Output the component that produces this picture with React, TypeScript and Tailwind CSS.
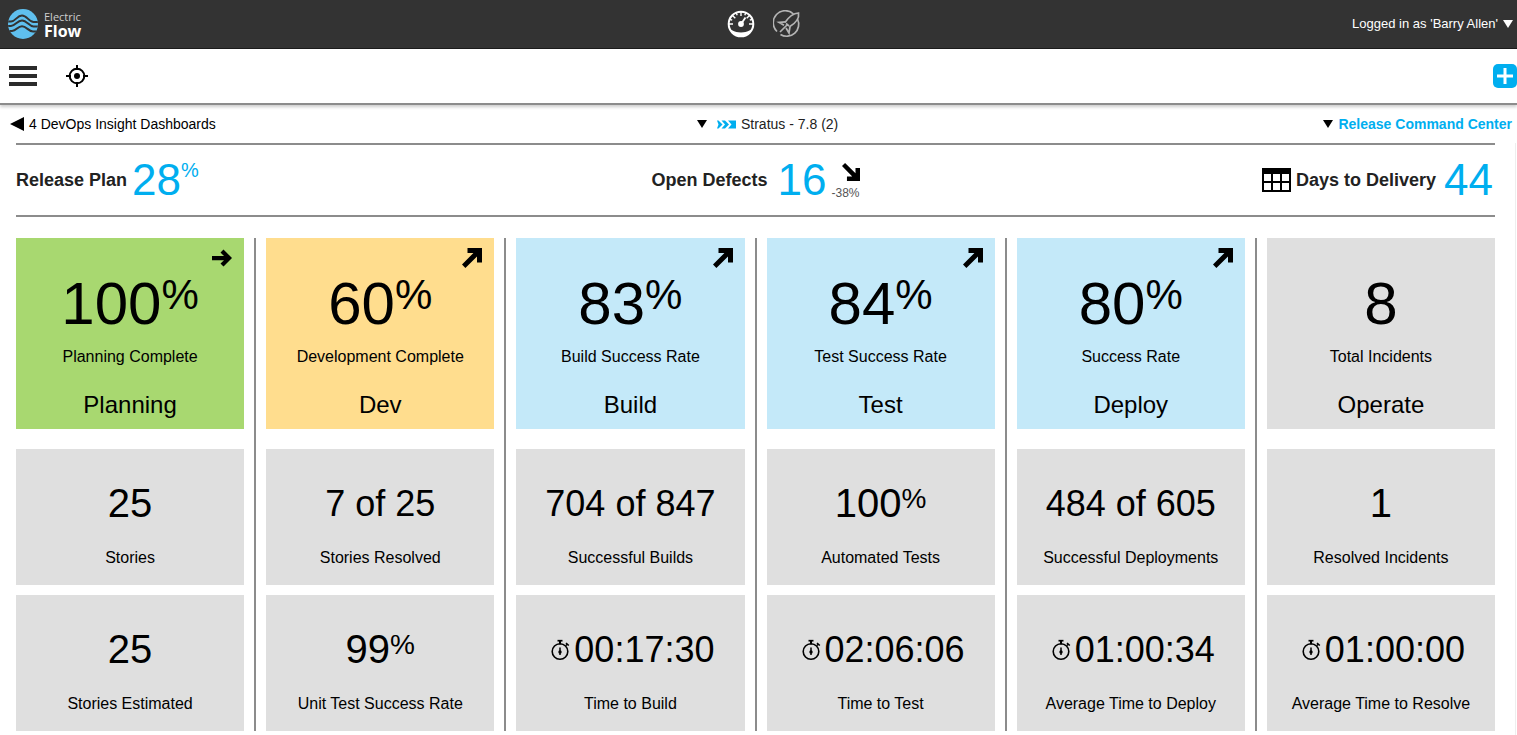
import type { ReactNode } from "react";

type Trend = "flat" | "up";

interface Metric {
    value: string;
    unit?: string;
    label: string;
    timer?: boolean;
}

interface Stage {
    name: string;
    color: string;
    trend?: Trend;
    headline: Metric;
    metrics: Metric[];
}

const stages: Stage[] = [
    {
        name: "Planning",
        color: "bg-[#a8d870]",
        trend: "flat",
        headline: { value: "100", unit: "%", label: "Planning Complete" },
        metrics: [
            { value: "25", label: "Stories" },
            { value: "25", label: "Stories Estimated" },
        ],
    },
    {
        name: "Dev",
        color: "bg-[#ffdd8e]",
        trend: "up",
        headline: { value: "60", unit: "%", label: "Development Complete" },
        metrics: [
            { value: "7 of 25", label: "Stories Resolved" },
            { value: "99", unit: "%", label: "Unit Test Success Rate" },
        ],
    },
    {
        name: "Build",
        color: "bg-[#c4e9f9]",
        trend: "up",
        headline: { value: "83", unit: "%", label: "Build Success Rate" },
        metrics: [
            { value: "704 of 847", label: "Successful Builds" },
            { value: "00:17:30", label: "Time to Build", timer: true },
        ],
    },
    {
        name: "Test",
        color: "bg-[#c4e9f9]",
        trend: "up",
        headline: { value: "84", unit: "%", label: "Test Success Rate" },
        metrics: [
            { value: "100", unit: "%", label: "Automated Tests" },
            { value: "02:06:06", label: "Time to Test", timer: true },
        ],
    },
    {
        name: "Deploy",
        color: "bg-[#c4e9f9]",
        trend: "up",
        headline: { value: "80", unit: "%", label: "Success Rate" },
        metrics: [
            { value: "484 of 605", label: "Successful Deployments" },
            { value: "01:00:34", label: "Average Time to Deploy", timer: true },
        ],
    },
    {
        name: "Operate",
        color: "bg-[#dfdfdf]",
        headline: { value: "8", label: "Total Incidents" },
        metrics: [
            { value: "1", label: "Resolved Incidents" },
            { value: "01:00:00", label: "Average Time to Resolve", timer: true },
        ],
    },
];

function Logo() {
    return (
        <a href="#" className="flex items-center gap-1.5 text-white">
            <svg viewBox="0 0 30 30" className="h-[30px] w-[30px]" aria-hidden="true">
                <defs>
                    <clipPath id="logo-disc">
                        <circle cx="15" cy="15" r="15" />
                    </clipPath>
                </defs>
                <g clipPath="url(#logo-disc)">
                    <rect width="30" height="30" fill="#5fbfee" />
                    <g fill="none" stroke="#333" strokeWidth="2">
                        <path d="M-1 12.500h4c4.500 0 6-6 11-6S21 13 25.500 13H31" />
                        <path d="M-1 17h4c4.500 0 6-5.500 11-5.500s7 6 11.500 6H31" />
                        <path d="M-1 22h5c4.500 0 5.500-4.800 10-4.800s6.500 5.300 11 5.300H31" />
                    </g>
                </g>
            </svg>
            <span className="flex flex-col font-['Open_Sans',sans-serif]">
                <span className="text-[11px] leading-[14px] text-[#cfcfcf]">Electric</span>
                <span className="text-base leading-[14px] font-bold">Flow</span>
            </span>
        </a>
    );
}

function GaugeIcon() {
    return (
        <svg viewBox="0 0 28 28" className="h-7 w-7" fill="none" stroke="#fff" aria-hidden="true">
            <circle cx="14" cy="14" r="12.300" strokeWidth="2" />
            <path d="M3 19.500c2.500 0 3.500 3 11 3s8.500-3 11-3c-2 4.500-6 7-11 7s-9-2.500-11-7z" fill="#fff" stroke="none" />
            <path d="M2 14h4M22 14h4M14 2v4M5.500 5.500l2.800 2.800M22.500 5.500l-2.800 2.800M9.300 3l.9 2.200M18.700 3l-.9 2.200M3 9.300l2.200.9M25 9.300l-2.200.9" strokeWidth="1.400" />
            <path d="M14 14l4.500-6.500" strokeWidth="1.800" />
            <circle cx="14" cy="14" r="2.900" fill="#fff" stroke="none" />
        </svg>
    );
}

function RocketIcon() {
    return (
        <svg viewBox="0 0 28 28" className="h-7 w-7" fill="none" stroke="#b4b4b4" strokeWidth="1.700" aria-hidden="true">
            <path d="M4 21.500A12 12 0 0 1 20.500 4" />
            <path d="M7.500 24.500A12 12 0 0 0 24.500 9" />
            <path d="M12 12.500C15 8 19.500 3.500 25.500 3c1 5.500-3.500 10.500-9 13.800" />
            <path d="M12.500 11.800L6 12.300l5 3M17 16.500l-1 6.500-3-5" />
            <path d="M13 13.500l3 2.500M14 15l-7 7" />
        </svg>
    );
}

function CrosshairIcon() {
    return (
        <svg viewBox="0 0 22 22" className="h-[22px] w-[22px]" fill="none" stroke="#000" strokeWidth="2" aria-hidden="true">
            <circle cx="11" cy="11" r="7.300" />
            <path d="M11 0v5M11 17v5M0 11h5M17 11h5" />
            <circle cx="11" cy="11" r="3" fill="#000" stroke="none" />
        </svg>
    );
}

function PipelineIcon() {
    return (
        <svg viewBox="0 0 19 9" className="h-[9px] w-[19px]" fill="#00aeef" aria-hidden="true">
            <path d="M0 .5h1.500L5.500 4.500l-4 4H0l1.500-4z" />
            <path d="M4.500.5H8l4 4-4 4H4.500l3.500-4z" />
            <path d="M11 .5h8v8h-8l3.500-4z" />
        </svg>
    );
}

function CalendarGridIcon() {
    return (
        <svg viewBox="0 0 29 24" className="h-6 w-[29px]" aria-hidden="true">
            <rect x="1" y="1" width="27" height="22" fill="#fff" stroke="#000" strokeWidth="2" />
            <rect width="29" height="6" />
            <path d="M10 5v18M19 5v18M1 14h27" stroke="#000" strokeWidth="2" />
        </svg>
    );
}

function StopwatchIcon() {
    return (
        <svg viewBox="0 0 24 24" className="h-6 w-6" fill="none" stroke="#000" aria-hidden="true">
            <circle cx="14" cy="14.500" r="7.800" strokeWidth="1.600" />
            <path d="M11.500 3.700h5" strokeWidth="1.700" />
            <path d="M14 4v3.500" strokeWidth="2" />
            <path d="M20 8.500L21.500 7M20 6l2.800 2.500" strokeWidth="1.600" />
            <path d="M14 10.500V18" strokeWidth="1.500" />
            <circle cx="14" cy="15" r="1.700" fill="#000" stroke="none" />
        </svg>
    );
}

function ArrowUpRight({ className }: { className: string }) {
    return (
        <svg viewBox="0 0 20 20" className={className} aria-hidden="true">
            <path d="M5.500 0H20v14.500h-5V8.600L3.400 20 0 16.600 11.400 5H5.500z" />
        </svg>
    );
}

function ArrowRight({ className }: { className: string }) {
    return (
        <svg viewBox="0 0 20 20" className={className} aria-hidden="true">
            <path d="M0 8h12L8.500 4.500 11.500 1.500 20 10l-8.500 8.500-3-3L12 12.200H0z" />
        </svg>
    );
}

function Caret({ className }: { className: string }) {
    return (
        <svg viewBox="0 0 10 8" className={className} fill="currentColor" aria-hidden="true">
            <path d="M0 0h10L5 8z" />
        </svg>
    );
}

function Card({ color, children }: { color: string; children: ReactNode }) {
    return <div className={`relative flex flex-col items-center whitespace-nowrap ${color}`}>{children}</div>;
}

function HeadlineCard({ stage }: { stage: Stage }) {
    const { headline, trend } = stage;

    return (
        <Card color={stage.color}>
            {trend === "up" && <ArrowUpRight className="absolute top-2.5 right-3 h-5 w-5" />}
            {trend === "flat" && <ArrowRight className="absolute top-2.5 right-3 h-5 w-5" />}
            <p className="flex items-start pt-9 text-[60px] leading-none">
                {headline.value}
                {headline.unit && <span className="text-[42px] leading-none">{headline.unit}</span>}
            </p>
            <p className="mt-[11px] text-base leading-6">{headline.label}</p>
            <h2 className="mt-5 pb-2 text-2xl leading-8">{stage.name}</h2>
        </Card>
    );
}

function MetricCard({ metric }: { metric: Metric }) {
    // ratios and durations are wider, so they use the smaller size
    const size = metric.value.length > 3 ? "text-4xl leading-[42px]" : "text-[40px] leading-10";

    return (
        <Card color="bg-[#dfdfdf]">
            <div className="flex h-[75px] items-start gap-1 pt-[34px]">
                {metric.timer && <span className="flex h-10 items-center"><StopwatchIcon /></span>}
                <p className={`flex items-start ${size}`}>
                    {metric.value}
                    {metric.unit && <span className="text-[28px] leading-8">{metric.unit}</span>}
                </p>
            </div>
            <p className="mt-[22px] pb-[15px] text-base leading-6">{metric.label}</p>
        </Card>
    );
}

export default function App() {
    return (
        <div className="min-h-screen bg-white font-['Liberation_Sans',Arial,sans-serif] text-black">

            <header className="grid h-[49px] grid-cols-3 items-center border-b border-[#1c1c1c] bg-[#333] pr-1 pl-2">
                <Logo />
                <nav className="flex items-center justify-center gap-[18px] pl-2">
                    <button aria-label="Dashboards" className="cursor-pointer"><GaugeIcon /></button>
                    <button aria-label="Releases" className="cursor-pointer"><RocketIcon /></button>
                </nav>
                <button className="flex cursor-pointer items-center gap-[5px] justify-self-end text-[13px] text-white">
                    Logged in as 'Barry Allen'
                    <Caret className="h-2 w-2.5" />
                </button>
            </header>

            <div className="flex h-14 items-center border-b-2 border-[#8c8c8c] pl-[9px] shadow-[0_2px_3px_rgba(0,0,0,0.2)]">
                <button aria-label="Menu" className="flex w-7 cursor-pointer flex-col gap-1">
                    <span className="h-1 bg-[#2b2b2b]" />
                    <span className="h-1 bg-[#2b2b2b]" />
                    <span className="h-1 bg-[#2b2b2b]" />
                </button>
                <button aria-label="Locate" className="ml-[29px] cursor-pointer"><CrosshairIcon /></button>
                <button aria-label="Add" className="ml-auto flex h-6 w-6 cursor-pointer items-center justify-center rounded-[5px] bg-[#00aeef]">
                    <svg viewBox="0 0 16 16" className="h-4 w-4" stroke="#fff" strokeWidth="3" aria-hidden="true">
                        <path d="M8 0v16M0 8h16" />
                    </svg>
                </button>
            </div>

            <nav className="flex h-[38px] items-center justify-between pr-[5px] pl-2.5 text-sm">
                <a href="#" className="flex items-center gap-[5px]">
                    <svg viewBox="0 0 14 14" className="h-3.5 w-3.5" aria-hidden="true">
                        <path d="M0 7L14 0v14z" />
                    </svg>
                    4 DevOps Insight Dashboards
                </a>
                <button className="flex cursor-pointer items-center gap-[5px] pr-1 text-[#222]">
                    <Caret className="mr-[5px] h-2 w-2.5 text-black" />
                    <PipelineIcon />
                    Stratus - 7.8 (2)
                </button>
                <button className="flex cursor-pointer items-center gap-[5px] font-bold text-[#00aeef]">
                    <Caret className="h-2 w-2.5 text-black" />
                    Release Command Center
                </button>
            </nav>

            <main className="mr-px border-r border-[#eee] pr-5 pb-1 pl-4">
                <section className="grid h-[74px] grid-cols-3 items-center border-y-2 border-[#8c8c8c] text-lg leading-6 font-bold text-[#222]">
                    <div className="flex items-center gap-[5px]">
                        Release Plan
                        <p className="flex items-start text-[44px] leading-none font-normal text-[#00aeef]">
                            28
                            <span className="text-xl leading-6">%</span>
                        </p>
                    </div>
                    <div className="flex items-center justify-center">
                        Open Defects
                        <p className="mr-[5px] ml-2.5 text-[44px] leading-none font-normal text-[#00aeef]">16</p>
                        <div className="flex flex-col items-end gap-1 pt-1 text-xs leading-4 font-normal text-[#555]">
                            <ArrowUpRight className="h-[18px] w-[18px] rotate-90 fill-black" />
                            -38%
                        </div>
                    </div>
                    <div className="flex items-center justify-end gap-2 pr-0.5">
                        <span className="flex items-center gap-[5px]">
                            <CalendarGridIcon />
                            Days to Delivery
                        </span>
                        <p className="text-[44px] leading-none font-normal text-[#00aeef]">44</p>
                    </div>
                </section>

                <section className="mt-[21px] grid grid-cols-6 gap-x-[22px]">
                    {stages.map((stage) => (
                        <article
                            key={stage.name}
                            className="relative flex flex-col after:absolute after:inset-y-0 after:-right-3 after:w-0.5 after:bg-[#8c8c8c] last:after:hidden"
                        >
                            <HeadlineCard stage={stage} />
                            <div className="mt-5 flex flex-col gap-2.5">
                                {stage.metrics.map((metric) => (
                                    <MetricCard key={metric.label} metric={metric} />
                                ))}
                            </div>
                        </article>
                    ))}
                </section>
            </main>
        </div>
    );
}
